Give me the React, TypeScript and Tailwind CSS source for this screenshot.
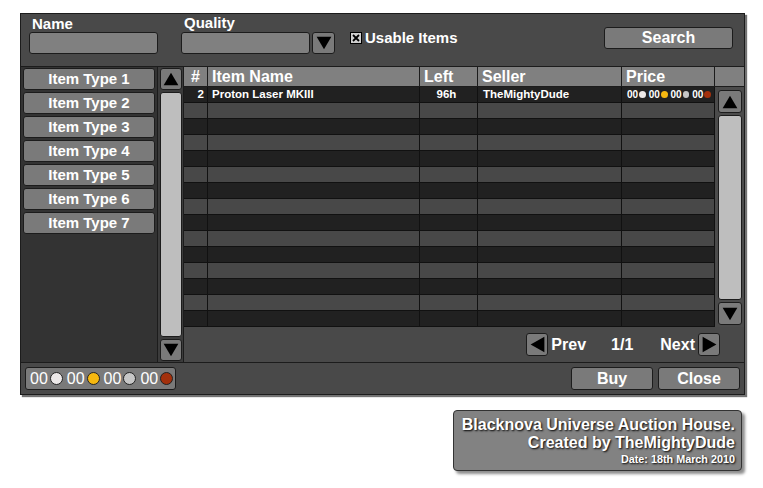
import React from "react";

type Dir = "up" | "down" | "left" | "right";

const Tri = ({ dir, className }: { dir: Dir; className?: string }) => {
  const pts = {
    up: "50,6 96,94 4,94",
    down: "4,6 96,6 50,94",
    left: "4,50 96,4 96,96",
    right: "4,4 96,50 4,96",
  }[dir];
  return (
    <svg viewBox="0 0 100 100" preserveAspectRatio="none" className={className}>
      <polygon points={pts} fill="#000" />
    </svg>
  );
};

const COIN = ["#ece8e8", "#f6b810", "#c6c6c6", "#a3300c"];

const ArrowBtn = ({ dir, className }: { dir: Dir; className: string }) => (
  <div
    className={`flex items-center justify-center bg-[#7a7a7a] border border-[#1c1c1c] rounded-[3px] ${className}`}
  >
    <Tri
      dir={dir}
      className={
        dir === "up" || dir === "down" ? "w-[16px] h-[14px]" : "w-[15px] h-[17px]"
      }
    />
  </div>
);

const cols = [
  { w: "w-[24px]", label: "#" },
  { w: "w-[212px]", label: "Item Name" },
  { w: "w-[58px]", label: "Left" },
  { w: "w-[144px]", label: "Seller" },
  { w: "w-[93px]", label: "Price" },
];

export default function App() {
  const rows = Array.from({ length: 15 }, (_, i) => i);
  return (
    <div className="w-[763px] h-[488px] bg-white overflow-hidden font-['Liberation_Sans',Arial,sans-serif] font-bold text-white">
      {/* Main panel */}
      <div className="ml-[20px] mt-[13px] w-[725px] h-[382px] bg-[#494949] border border-[#1c1c1c] shadow-[2px_2px_1px_rgba(0,0,0,0.55)] flex flex-col">
        {/* Top search area */}
        <div className="h-[53px] border-b border-[#1c1c1c] flex items-start">
          <div className="ml-[8px] mt-[1px] flex flex-col">
            <div className="pl-[3px] text-[15px] leading-[17px]">Name</div>
            <div className="w-[129px] h-[22px] bg-[#808080] border border-[#1c1c1c] rounded-[3px]" />
          </div>
          <div className="ml-[23px] mt-[0px] flex flex-col">
            <div className="pl-[3px] text-[15px] leading-[18px]">Quality</div>
            <div className="flex">
              <div className="w-[129px] h-[22px] bg-[#808080] border border-[#1c1c1c] rounded-[3px]" />
              <ArrowBtn dir="down" className="ml-[2px] w-[23px] h-[22px]" />
            </div>
          </div>
          <div className="ml-[15px] mt-[15px] flex items-center h-[17px]">
            <svg viewBox="0 0 12 12" className="w-[12px] h-[12px]">
              <rect x="0.5" y="0.5" width="11" height="11" fill="#d0d0d0" stroke="#000" />
              <path d="M3 3 L9 9 M9 3 L3 9" stroke="#000" strokeWidth="1.8" />
            </svg>
            <span className="ml-[3px] text-[15px] leading-[17px]">Usable Items</span>
          </div>
          <div className="ml-auto mr-[11px] mt-[13px] w-[129px] h-[22px] bg-[#7a7a7a] border border-[#1c1c1c] rounded-[3px] flex items-center justify-center text-[16px] leading-[20px]">
            Search
          </div>
        </div>

        {/* Middle */}
        <div className="h-[296px] flex border-b border-[#1c1c1c]">
          {/* Item type list */}
          <div className="w-[136px] bg-[#333333] pt-[1px] pl-[2px] flex flex-col gap-[2px]">
            {[1, 2, 3, 4, 5, 6, 7].map((n) => (
              <div
                key={n}
                className="w-[132px] h-[22px] bg-[#7a7a7a] border border-[#1c1c1c] rounded-[3px] flex items-center justify-center text-[15px] leading-[20px]"
              >
                Item Type {n}
              </div>
            ))}
          </div>
          {/* Left scrollbar */}
          <div className="w-[27px] bg-[#3c3c3c] border-x border-[#1c1c1c] pt-[1px] pb-[1px] pl-[2px] flex flex-col">
            <ArrowBtn dir="up" className="w-[22px] h-[22px]" />
            <div className="mt-[2px] w-[22px] flex-1 bg-[#bebebe] border border-[#1c1c1c] rounded-[3px]" />
            <ArrowBtn dir="down" className="mt-[2px] w-[22px] h-[22px]" />
          </div>
          {/* Table */}
          <div className="w-[560px] flex flex-col">
            <div className="h-[20px] flex bg-[#808080] border-b border-[#1c1c1c] text-[16px] leading-[19px]">
              {cols.map((c, i) => (
                <div
                  key={c.label}
                  className={`${c.w} border-r border-[#1c1c1c] ${i === 0 ? "text-center" : "pl-[4px]"}`}
                >
                  {c.label}
                </div>
              ))}
              <div className="flex-1" />
            </div>
            <div className="h-[240px] flex">
              <div className="w-[531px] flex flex-col">
                {rows.map((r) => (
                  <div
                    key={r}
                    className={`h-[16px] flex border-b border-[#111111] text-[11.5px] leading-[15px] ${
                      r % 2 === 0 ? "bg-[#212121]" : "bg-[#484848]"
                    }`}
                  >
                    <div className="w-[24px] border-r border-[#111111] text-right pr-[3px]">
                      {r === 0 ? "2" : ""}
                    </div>
                    <div className="w-[212px] border-r border-[#111111] pl-[4px]">
                      {r === 0 ? "Proton Laser MKIII" : ""}
                    </div>
                    <div className="w-[58px] border-r border-[#111111] text-center pr-[4px]">
                      {r === 0 ? "96h" : ""}
                    </div>
                    <div className="w-[144px] border-r border-[#111111] pl-[5px]">
                      {r === 0 ? "TheMightyDude" : ""}
                    </div>
                    <div className="w-[93px] border-r border-[#111111] pl-[5px] flex items-center">
                      {r === 0 &&
                        COIN.map((c) => (
                          <React.Fragment key={c}>
                            <span className="text-[10px] leading-[15px] w-[12px]">00</span>
                            <span
                              className="ml-[1px] mr-[3px] w-[7px] h-[7px] rounded-full"
                              style={{ backgroundColor: c }}
                            />
                          </React.Fragment>
                        ))}
                    </div>
                  </div>
                ))}
              </div>
              {/* Right scrollbar */}
              <div className="w-[29px] bg-[#4b4b4b] pt-[3px] pb-[2px] pl-[3px] flex flex-col">
                <ArrowBtn dir="up" className="w-[24px] h-[23px]" />
                <div className="mt-[2px] w-[24px] flex-1 bg-[#bebebe] border border-[#1c1c1c] rounded-[3px]" />
                <ArrowBtn dir="down" className="mt-[2px] w-[24px] h-[23px]" />
              </div>
            </div>
            {/* Pagination */}
            <div className="h-[36px] flex items-center justify-end pr-[24px] text-[16px] leading-[20px]">
              <ArrowBtn dir="left" className="w-[22px] h-[23px]" />
              <span className="ml-[3px]">Prev</span>
              <span className="ml-[25px]">1/1</span>
              <span className="ml-[27px]">Next</span>
              <ArrowBtn dir="right" className="ml-[3px] w-[22px] h-[23px]" />
            </div>
          </div>
        </div>

        {/* Bottom bar */}
        <div className="flex-1 flex items-center px-[4px]">
          <div className="w-[151px] h-[23px] bg-[#7a7a7a] border border-[#1c1c1c] rounded-[3px] flex items-center pl-[4px] font-normal text-[16px] leading-[20px]">
            {COIN.map((c, i) => (
              <React.Fragment key={c}>
                <span>00</span>
                <span
                  className={`ml-[2px] ${i < 3 ? "mr-[4px]" : ""} w-[13px] h-[13px] rounded-full border border-[#222222]`}
                  style={{ backgroundColor: c }}
                />
              </React.Fragment>
            ))}
          </div>
          <div className="ml-auto w-[82px] h-[23px] bg-[#7a7a7a] border border-[#1c1c1c] rounded-[3px] flex items-center justify-center text-[16px] leading-[20px]">
            Buy
          </div>
          <div className="ml-[5px] w-[82px] h-[23px] bg-[#7a7a7a] border border-[#1c1c1c] rounded-[3px] flex items-center justify-center text-[16px] leading-[20px]">
            Close
          </div>
        </div>
      </div>

      {/* Credits box */}
      <div className="ml-[453px] mt-[15px] w-[289px] h-[61px] bg-[#828282] border border-[#333333] rounded-[4px] shadow-[3px_3px_3px_rgba(0,0,0,0.45)] pt-[4px] pr-[6px] flex flex-col items-end [text-shadow:1px_1px_2px_#000]">
        <div className="text-[16px] leading-[19px]">Blacknova Universe Auction House.</div>
        <div className="text-[16px] leading-[18px]">Created by TheMightyDude</div>
        <div className="text-[10.8px] leading-[15px]">Date: 18th March 2010</div>
      </div>
    </div>
  );
}
